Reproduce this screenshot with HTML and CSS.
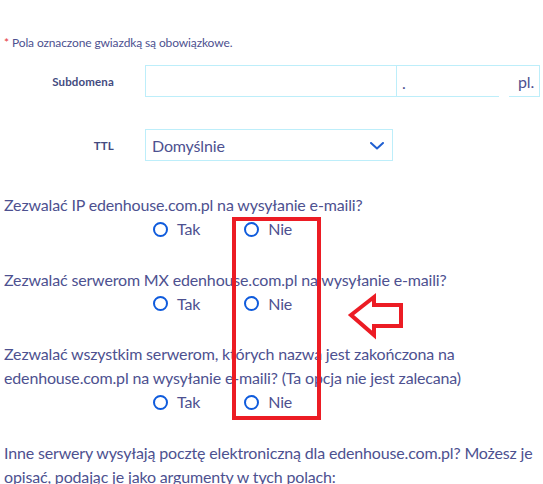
FILE: index.html
```html
<!DOCTYPE html>
<html lang="pl">
<head>
<meta charset="utf-8">
<link rel="stylesheet" href="styles.css">
</head>
<body>
<div class="page">
  <p class="note"><span class="req">*</span> Pola oznaczone gwiazdką są obowiązkowe.</p>

  <div class="field field-subdomain">
    <label class="field-label">Subdomena</label>
    <div class="field-control">
      <div class="input input-main"></div>
      <div class="input input-suffix"><span class="dot">.</span><span class="suffix">pl.</span></div>
    </div>
  </div>

  <div class="field field-ttl">
    <label class="field-label">TTL</label>
    <div class="field-control">
      <div class="select">
        <span>Domyślnie</span>
        <svg class="chevron" width="14" height="8" viewBox="0 0 14 8"><path d="M1 1 L7 6.5 L13 1" fill="none" stroke="#1f5fd1" stroke-width="2" stroke-linecap="round" stroke-linejoin="round"/></svg>
      </div>
    </div>
  </div>

  <div class="question">
    <p class="q-text">Zezwalać IP edenhouse.com.pl na wysyłanie e-maili?</p>
    <div class="radios">
      <label class="radio"><span class="circle"></span>Tak</label>
      <label class="radio"><span class="circle"></span>Nie</label>
    </div>
  </div>

  <div class="question">
    <p class="q-text">Zezwalać serwerom MX edenhouse.com.pl na wysyłanie e-maili?</p>
    <div class="radios">
      <label class="radio"><span class="circle"></span>Tak</label>
      <label class="radio"><span class="circle"></span>Nie</label>
    </div>
  </div>

  <div class="question">
    <p class="q-text">Zezwalać wszystkim serwerom, których nazwa jest zakończona na edenhouse.com.pl na wysyłanie e-maili? (Ta opcja nie jest zalecana)</p>
    <div class="radios">
      <label class="radio"><span class="circle"></span>Tak</label>
      <label class="radio"><span class="circle"></span>Nie</label>
    </div>
  </div>

  <p class="q-text">Inne serwery wysyłają pocztę elektroniczną dla edenhouse.com.pl? Możesz je opisać, podając je jako argumenty w tych polach:</p>

  <svg class="annotation" width="543" height="484" viewBox="0 0 543 484">
    <rect x="234" y="219" width="85" height="199" fill="none" stroke="#ec1c24" stroke-width="4"/>
    <polygon points="351,315 374,297 374,305 401,305 401,326 374,326 374,335" fill="none" stroke="#ec1c24" stroke-width="4" stroke-linejoin="miter"/>
  </svg>
</div>
</body>
</html>
```
FILE: styles.css
```css
html, body {
  margin: 0;
  padding: 0;
  background: #ffffff;
}

.page {
  position: relative;
  width: 543px;
  height: 484px;
  box-sizing: border-box;
  padding: 35px 4px 0;
  overflow: hidden;
  font-family: "Lato", "Open Sans", sans-serif;
  color: #4d5190;
  letter-spacing: -0.16px;
}

p { margin: 0; }

.note {
  font-size: 12px;
  line-height: 16px;
  letter-spacing: -0.12px;
  margin-bottom: 14px;
}

.req {
  color: #e5343a;
}

.field {
  display: grid;
  grid-template-columns: 110px 1fr;
  column-gap: 31px;
  align-items: center;
}

.field-label {
  text-align: right;
  font-weight: 700;
  font-size: 11.5px;
  color: #434b80;
  letter-spacing: 0.15px;
}

.field-control {
  display: flex;
}

.input {
  height: 32px;
  box-sizing: border-box;
  border: 1px solid #bdeefa;
  background: #fff;
}

.input-main {
  width: 252px;
}

.input-suffix {
  width: 143px;
  border-left: none;
  border-bottom: none;
  display: flex;
  align-items: center;
  justify-content: space-between;
  padding: 0 5px 0 5px;
  font-size: 16px;
  background:
    linear-gradient(#bdeefa, #bdeefa) left bottom / 102px 1px no-repeat,
    linear-gradient(#bdeefa, #bdeefa) right bottom / 30px 1px no-repeat,
    #fff;
}

.dot { padding-top: 2px; }

.field-subdomain {
  margin-bottom: 32px;
}

.select {
  width: 248px;
  height: 32px;
  box-sizing: border-box;
  border: 1px solid #bdeefa;
  display: flex;
  align-items: center;
  justify-content: space-between;
  padding: 0 8px 0 6px;
  font-size: 16px;
}

.chevron { margin-top: 1px; }

.field-ttl {
  margin-bottom: 32px;
}

.q-text {
  font-size: 16px;
  line-height: 24px;
}

.question {
  margin-bottom: 26.5px;
}

.radios {
  display: flex;
  gap: 44px;
  padding-left: 149px;
  font-size: 16px;
  line-height: 24px;
}

.radio {
  display: flex;
  align-items: center;
  gap: 9px;
}

.circle {
  width: 15px;
  height: 15px;
  box-sizing: border-box;
  border: 2.5px solid #0f5bdc;
  border-radius: 50%;
}

.annotation {
  position: absolute;
  left: 0;
  top: 0;
  pointer-events: none;
}
```
